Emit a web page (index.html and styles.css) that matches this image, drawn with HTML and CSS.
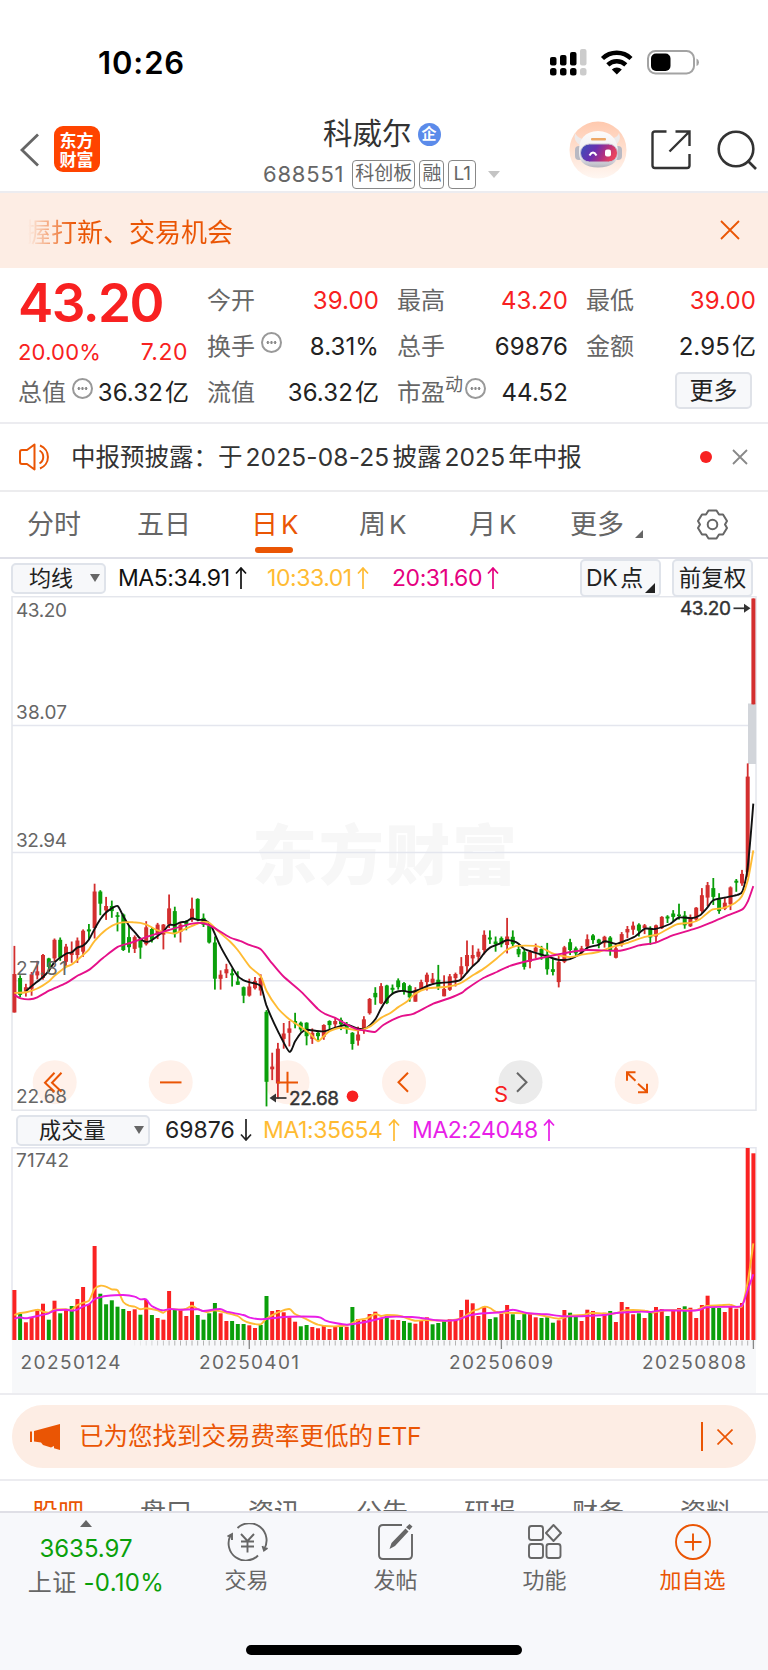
FILE: index.html
```html
<!DOCTYPE html>
<html lang="zh-CN">
<head>
<meta charset="utf-8">
<title>科威尔 688551</title>
<link rel="stylesheet" href="styles.css">
</head>
<body>
<div class="status">
  <span class="clock">10:26</span>
  <svg class="status-icons" width="152" height="30" viewBox="550 47 152 30">
    <g fill="#000"><rect x="551" y="57" width="6.5" height="8.5" rx="2"/><rect x="561" y="55" width="6.5" height="10.5" rx="2"/><rect x="571" y="52" width="6.5" height="13.5" rx="2"/>
    <rect x="551" y="68" width="6.5" height="7.5" rx="2.5"/><rect x="561" y="68" width="6.5" height="7.5" rx="2.5"/><rect x="571" y="68" width="6.5" height="7.5" rx="2.5"/></g>
    <g fill="#ccc"><rect x="581" y="49" width="6.5" height="16.5" rx="2"/><rect x="581" y="68" width="6.5" height="7.5" rx="2.5"/></g>
    <g fill="none" stroke="#000" stroke-width="4.4"><path d="M603.5 58.5a20.5 20.5 0 0 1 28.5 0"/><path d="M608.8 64.8a13 13 0 0 1 18 0"/></g>
    <path d="M612.8 69.5a7.5 7.5 0 0 1 10 0l-5 5z"/>
    <rect x="649" y="51" width="46" height="22.5" rx="7.5" fill="none" stroke="#a3a3a3" stroke-width="2"/>
    <rect x="652" y="53.5" width="19.5" height="17.5" rx="5" fill="#000"/><path d="M697.5 58.5q2.5 1 2.5 3.8t-2.5 3.8z" fill="#a3a3a3"/>
  </svg>
</div>

<header class="header">
  <svg class="back" width="20" height="34" viewBox="0 0 20 34"><path d="M18 1.5 2 17 18 32.500" fill="none" stroke="#666" stroke-width="2.8"/></svg>
  <div class="logo"><span>东方</span><span>财富</span></div>
  <div class="title">
    <div class="name">科威尔<i class="corp">企</i></div>
    <div class="code"><span class="num">688551</span><b>科创板</b><b>融</b><b>L1</b><i class="caret"></i></div>
  </div>
  <svg class="robot" width="58" height="58" viewBox="0 0 58 58">
    <defs><linearGradient id="rb" x1="0" y1="0" x2="0" y2="1"><stop offset="0" stop-color="#ffc9ae"/><stop offset="1" stop-color="#fff7f2"/></linearGradient>
    <linearGradient id="rf" x1="0" y1="0" x2="1" y2=".3"><stop offset="0" stop-color="#3552b8"/><stop offset=".45" stop-color="#6a2fb0"/><stop offset=".75" stop-color="#b3317f"/><stop offset="1" stop-color="#e8445f"/></linearGradient>
    <linearGradient id="rw" x1="0" y1="0" x2="0" y2="1"><stop offset="0" stop-color="#fdfbfa"/><stop offset=".7" stop-color="#ececf0"/><stop offset="1" stop-color="#b4b4be"/></linearGradient></defs>
    <circle cx="29" cy="29" r="28.500" fill="url(#rb)"/>
    <path d="M6 12Q4 20 11 24L16 18Q9 18 6 12zM50 12Q53 20 46 24L41 17Q48 18 50 12z" fill="#eeeaea"/>
    <rect x="6" y="25" width="8" height="14" rx="4" fill="#b9b9c3"/><rect x="45" y="25" width="8" height="14" rx="4" fill="#b9b9c3"/>
    <path d="M10 32Q9 11 29 10Q49 11 49 32Q49 46 29 46.500Q10 46 10 32z" fill="url(#rw)"/>
    <rect x="22" y="17" width="15" height="2.500" rx="1" fill="#eda766"/>
    <rect x="11.500" y="23" width="37" height="18" rx="9" fill="url(#rf)" stroke="#c6c2d2" stroke-width="1"/>
    <path d="M20.500 34.500q3.500-6 7 0" stroke="#fff" stroke-width="2" fill="none"/><rect x="36" y="28.500" width="6" height="7" rx="2" fill="#fff"/>
  </svg>
  <svg class="share" width="40" height="40" viewBox="0 0 40 40"><g fill="none" stroke="#333" stroke-width="2.400"><path d="M15.500 1.500H4Q1.500 1.500 1.500 4V35.500Q1.500 38 4 38H36Q38.500 38 38.500 35.500V24"/><path d="M24.500 1.500H38.500V16M38 2 18.500 21.500"/></g></svg>
  <svg class="search" width="42" height="42" viewBox="0 0 42 42"><g fill="none" stroke="#333" stroke-width="2.600"><circle cx="19" cy="19" r="17.300"/><path d="m30.500 30.500 8.500 8.500"/></g></svg>
</header>

<div class="promo"><span class="promo-text">握打新、交易机会</span>
  <svg width="20" height="20" viewBox="0 0 20 20"><path d="m1 1 18 18M19 1 1 19" stroke="#ea5504" stroke-width="1.800"/></svg></div>

<section class="quote">
  <div class="col lead">
    <div class="price">43.20</div>
    <div class="change"><span>20.00%</span><span class="diff">7.20</span></div>
    <div class="stat"><label>总值</label><i class="tip"></i><em>36.32<u>亿</u></em></div>
  </div>
  <div class="col">
    <div class="stat"><label>今开</label><em class="red">39.00</em></div>
    <div class="stat"><label>换手</label><i class="tip"></i><em>8.31%</em></div>
    <div class="stat"><label>流值</label><em>36.32<u>亿</u></em></div>
  </div>
  <div class="col">
    <div class="stat"><label>最高</label><em class="red">43.20</em></div>
    <div class="stat"><label>总手</label><em>69876</em></div>
    <div class="stat"><label>市盈</label><sup>动</sup><i class="tip close"></i><em>44.52</em></div>
  </div>
  <div class="col">
    <div class="stat"><label>最低</label><em class="red">39.00</em></div>
    <div class="stat"><label>金额</label><em>2.95<u>亿</u></em></div>
    <div class="stat"><span class="more-btn">更多</span></div>
  </div>
</section>

<div class="notice">
  <svg width="34" height="28" viewBox="0 0 34 28"><g fill="none" stroke="#ea5504" stroke-width="2" stroke-linejoin="round"><path d="M15.500 1.500 8 7H3Q1 7 1 9V19Q1 21 3 21H8L15.500 26.500z"/><path d="M20.500 7.500a7.500 7.500 0 0 1 0 13M21 2.500a12.300 12.300 0 0 1 0 23"/></g></svg>
  <span class="notice-text">中报预披露：于<s>2025-08-25</s>披露<s>2025</s>年中报</span>
  <i class="dot"></i>
  <svg class="nx" width="16" height="16" viewBox="0 0 16 16"><path d="m1 1 14 14M15 1 1 15" stroke="#888" stroke-width="1.800"/></svg>
</div>

<nav class="tabs">
  <span>分时</span><span>五日</span><span class="on">日<s>K</s></span><span>周<s>K</s></span><span>月<s>K</s></span><span class="tmore">更多</span>
  <svg width="31" height="31" viewBox="0 0 31 31"><g fill="none" stroke="#666" stroke-width="2" stroke-linejoin="round"><path d="M11.500 1.500H19.500L22 5.500H26L30 12 28 15.500 30 19 26 25.500H22L19.500 29.500H11.500L9 25.500H5L1 19 3 15.500 1 12 5 5.500H9z"/><circle cx="15.500" cy="15.500" r="4.800"/></g></svg>
</nav>

<div class="ma-row">
  <span class="select">均线<i></i></span>
  <span class="t5">MA5:34.91<svg class="arr" width="12" height="22" viewBox="0 0 12 22"><path d="M6 22V1M1 6.500 6 1l5 5.500" fill="none" stroke="currentColor" stroke-width="1.700"/></svg></span>
  <span class="t10">10:33.01<svg class="arr" width="12" height="22" viewBox="0 0 12 22"><path d="M6 22V1M1 6.500 6 1l5 5.500" fill="none" stroke="currentColor" stroke-width="1.700"/></svg></span>
  <span class="t20">20:31.60<svg class="arr" width="12" height="22" viewBox="0 0 12 22"><path d="M6 22V1M1 6.500 6 1l5 5.500" fill="none" stroke="currentColor" stroke-width="1.700"/></svg></span>
  <span class="dk">DK<s>点</s></span><span class="fq">前复权</span>
</div>

<svg id="kline" class="kline" width="768" height="515" viewBox="0 596 768 515"></svg>

<div class="vol-row">
  <span class="select wide">成交量<i></i></span>
  <span class="v0">69876<svg class="arr" width="12" height="22" viewBox="0 0 12 22"><path d="M6 0V21M1 15.500 6 21l5-5.500" fill="none" stroke="currentColor" stroke-width="1.700"/></svg></span>
  <span class="v1">MA1:35654<svg class="arr" width="12" height="22" viewBox="0 0 12 22"><path d="M6 22V1M1 6.500 6 1l5 5.500" fill="none" stroke="currentColor" stroke-width="1.700"/></svg></span>
  <span class="v2">MA2:24048<svg class="arr" width="12" height="22" viewBox="0 0 12 22"><path d="M6 22V1M1 6.500 6 1l5 5.500" fill="none" stroke="currentColor" stroke-width="1.700"/></svg></span>
</div>

<svg id="volume" class="volume" width="768" height="246" viewBox="0 1147 768 246"></svg>

<div class="etf-wrap"><div class="etf">
  <svg width="32" height="26" viewBox="0 0 32 26"><path d="M1 7.500V18" stroke="#ea5504" stroke-width="2"/><path d="M4 7 30 0V26L24 24.300V22L21 23.500 13 21 11 18.500 4 17.500z" fill="#ea5504"/></svg>
  <span class="etf-text">已为您找到交易费率更低的<s>ETF</s></span><i class="bar"></i>
  <svg width="16" height="16" viewBox="0 0 16 16"><path d="m.5.5 15 15M15.500.5l-15 15" stroke="#ea5504" stroke-width="1.700"/></svg>
</div></div>

<nav class="subtabs"><span class="on">股吧</span><span>盘口</span><span>资讯</span><span>公告</span><span>研报</span><span>财务</span><span>资料</span></nav>

<footer class="footer">
  <div class="index"><i class="up"></i><span class="green">3635.97</span><span>上证 <s class="green">-0.10%</s></span></div>
  <div class="act"><svg width="44" height="38" viewBox="0 0 44 38"><g fill="none" stroke="#666" stroke-width="1.900"><path d="M12.500 5A17.200 17.200 0 0 1 39 26.500M33 32.500A17.200 17.200 0 0 1 5.500 12.500M2.500 13.500 7 11V17M42.500 25 39 27.500 37.500 23"/><path d="m16 11 6.500 7 6.500-7M22.500 18V29.500M16 18.500H29M16 23.500H29"/></g></svg><span>交易</span></div>
  <div class="act"><svg width="38" height="38" viewBox="0 0 38 38"><path d="M25 2H6Q2 2 2 6V32Q2 36 6 36H31Q35 36 35 32V11" fill="none" stroke="#666" stroke-width="1.900"/><path d="m32.500 1 3 2.500-3 3.500-3.500-2.700zM28.500 5.500l3 3L18 23l-5.500 3 2-6z" fill="#666"/></svg><span>发帖</span></div>
  <div class="act"><svg width="36" height="38" viewBox="0 0 36 38"><g fill="none" stroke="#666" stroke-width="1.900"><rect x="2" y="3" width="14" height="14" rx="2.500"/><rect x="2" y="21" width="14" height="14" rx="2.500"/><rect x="19.500" y="21" width="14" height="14" rx="2.500"/><path d="m26.500 2 7.500 8-7.500 8-7.500-8z" stroke-linejoin="round"/></g></svg><span>功能</span></div>
  <div class="act orange"><svg width="38" height="38" viewBox="0 0 38 38"><g fill="none" stroke="#ea5504" stroke-width="1.900"><circle cx="19" cy="19" r="17"/><path d="M19 10.500V27.500M10.500 19H27.500"/></g></svg><span>加自选</span></div>
  <i class="home"></i>
</footer>
<script src="chart.js"></script>
</body>
</html>
```
FILE: styles.css
```css
*{box-sizing:border-box}
body{margin:0;width:768px;height:1670px;overflow:hidden;background:#fff;color:#333;font-family:Inter,"Noto Sans CJK SC",sans-serif;font-size:24px;line-height:1}
i,em{font-style:normal}
u,s{text-decoration:none}
svg{display:block;flex:none}
.status{height:112px;display:flex;justify-content:space-between;padding:47px 67px 0 98px}
.clock{font-weight:600;font-size:31px;line-height:31px;color:#000;letter-spacing:.9px}
.header{height:81px;border-bottom:2px solid #ececf0;display:flex;align-items:flex-start;padding-left:20px}
.back{margin-top:21px}
.logo{margin:14px 0 0 13.5px;width:46px;height:46px;border-radius:9px;background:#ff4400;color:#fff;font:700 17px/19px "Noto Sans CJK SC",sans-serif;padding-top:4px;display:grid;grid-template-rows:19px 19px;justify-items:center}
.title{margin-left:164.5px;width:236px}
.name{display:flex;align-items:center;height:44px;padding-left:59px;font-size:29.5px}
.corp{width:23px;height:23px;margin-left:6px;border-radius:50%;background:#5b8bea;color:#fff;font-size:15px;font-weight:700;line-height:22px;text-align:center}
.code{display:flex;align-items:center;height:36px;color:#666}
.num{font-size:22px;letter-spacing:.8px;width:89px;margin-left:-1px;margin-right:1px}
.code b{font-weight:400;font-size:19px;border:1.5px solid #888;border-radius:4px;height:29px;line-height:25px;padding:0 2px;margin-right:4px;white-space:nowrap}
.code b:nth-of-type(3){padding:0 4px}
.caret{border:6.5px solid transparent;border-top:7px solid #c4c4c4;border-bottom:0;margin-left:8px}
.robot{margin:9px 0 0 69px}
.share{margin:18px 0 0 24px}
.search{margin:18px 0 0 26px}
.promo{height:75px;background:#fdede4;display:flex;align-items:center;justify-content:space-between;padding:4px 28px 0 25px}
.promo-text{font-size:26px;background:linear-gradient(90deg,#ea550400 3px,#ea5504 50px);-webkit-background-clip:text;background-clip:text;color:transparent;line-height:34px}
.promo svg{margin-bottom:5px}
.quote{height:156px;border-bottom:2px solid #ececf0;display:grid;grid-template-columns:171px 172px 171px 170px;column-gap:18px;padding-left:18px}
.col{padding-top:10px}
.lead{padding-top:0}
.price{font-size:53px;font-weight:600;color:#f82121;height:68px;line-height:71px;letter-spacing:-1.6px}
.change{height:34px;line-height:33px;display:flex;justify-content:space-between;color:#f82121;font-size:22px;letter-spacing:.2px}
.diff{font-size:23px;letter-spacing:.5px;margin-right:1px}
.stat{height:46px;display:flex;align-items:center;color:#666;white-space:nowrap}
.stat label{font-size:24px}
.stat em{margin-left:auto;font-size:24px;color:#222;letter-spacing:.1px}
.stat em u{margin-left:2px}
.stat em.red{color:#f82121}
.tip{width:21px;height:21px;border:2px solid #999;border-radius:50%;margin:-9px 0 0 6px;display:flex;align-items:center;justify-content:center;flex:none}
.lead .tip{margin-right:-6px}
.tip:before{content:"";width:11px;height:2.5px;background:radial-gradient(circle,#888 1.2px,transparent 1.5px) 0 0/3.67px 2.5px}
.tip.close{margin-left:2px}
.stat sup{font-size:18px;margin-top:-16px;line-height:18px}
.more-btn{margin-left:auto;margin-right:4px;margin-top:-5px;width:77px;height:37px;border:2px solid #dfe2e8;border-radius:5px;background:#f7f8fa;color:#222;text-align:center;line-height:33px;font-size:24px}
.notice{height:68px;border-bottom:2px solid #ececee;display:flex;align-items:center;padding-left:19px}
.notice-text{font-size:24.5px;margin-left:18px;width:629px;white-space:nowrap;color:#333}
.notice-text s{margin:0 3px;letter-spacing:.15px}
.dot{width:12px;height:12px;border-radius:50%;background:#f82121}
.nx{margin-left:20px}
.tabs{height:67px;border-bottom:2px solid #dfe0e8;display:grid;grid-template-columns:110px 114px 108px 110px 101px 127px 34px;padding-left:27px;color:#666;font-size:27px;align-items:center}
.tabs span{height:65px;line-height:65px;position:relative;white-space:nowrap}
.tabs s{margin-left:3px;font-size:26px}
.tabs .on{color:#ea5504}
.tabs .on:after{content:"";position:absolute;left:4px;bottom:4px;width:38px;height:6px;border-radius:3px;background:#ea5504}
.tmore:after{content:"";position:absolute;left:65px;bottom:19px;border:4px solid;border-color:transparent #666 #666 transparent}
.ma-row{height:38px;margin-bottom:-1px;display:flex;align-items:center;padding-left:11px;font-size:23px;letter-spacing:-.45px;white-space:nowrap}
.select{width:95px;height:31px;border:2px solid #dfe3ea;border-radius:5px;background:#f7f8fa;display:flex;align-items:center;padding-left:16px;color:#222;font-size:22px;letter-spacing:0}
.select i{margin-left:auto;margin-right:4px;border:5px solid transparent;border-top:8px solid #666;border-bottom:0}
.ma-row>span:not(.select){display:flex;align-items:center}
.arr{margin-left:5px}
.t5{width:149px;margin-left:12px;color:#111}
.t10{width:125px;color:#ffbb33}
.t20{width:188px;color:#e5007f}
.ma-row .dk,.ma-row .fq{height:38px;border:2px solid #dfe3ea;border-radius:5px;background:#f7f8fa;color:#222;justify-content:center;font-size:23px;position:relative}
.ma-row .dk{width:81px;justify-content:flex-start;padding-left:4px}
.dk s{margin-left:3px}
.dk:after{content:"";position:absolute;right:4px;bottom:2px;border:5.5px solid;border-color:transparent #222 #222 transparent}
.ma-row .fq{width:81px;margin-left:11px;font-size:22.5px;letter-spacing:0}
.kline{font-family:Inter,"Noto Sans CJK SC",sans-serif}
.vol-row{height:36px;display:flex;align-items:center;padding:2px 0 0 16px;font-size:23px;letter-spacing:-.4px;white-space:nowrap}
.vol-row>span{display:flex;align-items:center}
.select.wide{width:134px;padding-left:21px;letter-spacing:.2px}
.v0{margin-left:15px;width:98px;color:#222;letter-spacing:0}
.v1{width:149px;color:#ffbb33}
.v2{color:#e81ee8}
.etf-wrap{height:88px;border-top:2px solid #ececf0;border-bottom:2px solid #ececf0;padding:10px 12px 0}
.etf{height:63px;border-radius:31px;background:#fdede4;display:flex;align-items:center;color:#ea5504;padding-left:18px}
.etf-text{margin-left:17px;width:622px;font-size:24.5px;white-space:nowrap}
.etf-text s{margin-left:4px;letter-spacing:-.3px}
.bar{width:1.5px;height:29px;background:#ea5504;margin-right:14px}
.subtabs{height:30px;overflow:hidden;display:grid;grid-template-columns:repeat(7,108px);padding:17px 0 0 32px;font-size:26px;line-height:30px;color:#666}
.subtabs .on{color:#ea5504}
.footer{height:159px;background:#f7f8fb;border-top:2px solid #dfdfe6;display:grid;grid-template-columns:172px 149px 149px 149px 147px;color:#666;position:relative}
.index{display:flex;flex-direction:column;align-items:center;padding:7px 0 0 20px;font-size:24px;white-space:nowrap}
.up{border:6.5px solid transparent;border-top:0;border-bottom:7px solid #666;margin-right:20px}
.index span{margin-top:10px;line-height:24px}
.index span:nth-of-type(1){margin-right:20px}
.index span:nth-of-type(2){letter-spacing:.3px}
.green{color:#0aa00a}
.act{display:flex;flex-direction:column;align-items:center;padding-top:10px;font-size:22px}
.act span{margin-top:8px;line-height:22px}
.orange{color:#ea5504}
.home{position:absolute;left:246px;top:132px;width:276px;height:10px;border-radius:5px;background:#000}
```
FILE: chart.js
```js
// Candle rows: direction, high, body top, body bottom, low (chart units below the chart origin)
const candles = `R 1053 1136 1250 1250,G 1140 1148 1198 1205,R 1165 1175 1188 1203,R 1130 1137 1180 1200,R 1097 1128 1140 1152,R 1077 1080 1148 1153,G 1088 1090 1115 1130,R 1031 1035 1090 1103,G 1028 1035 1088 1097,R 1047 1055 1100 1112,R 1040 1072 1080 1103,R 1028 1037 1080 1103,R 1004 1008 1070 1085,G 988 1004 1010 1035,R 869 892 1000 1031,G 888 892 928 962,R 908 935 948 976,G 919 935 950 970,G 953 962 967 1010,G 957 960 1065 1068,G 992 1027 1057 1073,R 1022 1027 1062 1074,G 1028 1035 1058 1091,R 980 998 1048 1052,G 997 1003 1035 1043,R 985 990 1020 1033,R 988 990 1020 1063,R 901 942 990 1000,G 937 950 1018 1028,R 985 990 1012 1043,G 977 980 990 1007,R 910 943 975 982,G 912 914 975 980,G 957 970 990 997,G 985 992 1043 1046,G 1025 1043 1150 1182,R 1125 1138 1150 1182,R 1106 1122 1134 1148,G 1120 1134 1140 1173,G 1128 1158 1168 1168,G 1173 1175 1200 1222,R 1150 1173 1200 1203,R 1145 1157 1178 1182,R 1137 1148 1185 1200,G 1243 1248 1455 1528,R 1369 1410 1418 1450,R 1340 1357 1460 1505,R 1281 1312 1328 1357,R 1275 1297 1310 1350,G 1251 1275 1282 1297,G 1277 1280 1300 1307,G 1279 1280 1320 1347,R 1297 1310 1328 1343,G 1308 1310 1320 1335,R 1285 1287 1322 1331,G 1273 1275 1287 1300,R 1266 1275 1285 1297,G 1265 1272 1285 1302,G 1278 1285 1297 1313,G 1308 1310 1343 1360,R 1292 1315 1333 1348,R 1261 1270 1300 1313,R 1207 1210 1252 1256,G 1175 1192 1205 1227,R 1163 1172 1223 1225,G 1168 1170 1222 1225,G 1167 1177 1183 1197,G 1149 1155 1175 1182,G 1160 1163 1188 1197,G 1168 1172 1205 1218,R 1175 1185 1218 1218,R 1153 1160 1180 1185,R 1132 1138 1160 1185,R 1133 1150 1162 1168,G 1109 1153 1175 1183,R 1140 1180 1202 1202,R 1136 1143 1183 1186,R 1132 1136 1148 1173,R 1086 1113 1137 1153,R 1037 1080 1113 1133,R 1051 1080 1090 1113,R 1061 1070 1085 1100,R 1007 1020 1065 1078,G 1007 1028 1034 1047,G 1025 1040 1048 1070,G 1025 1030 1048 1057,R 970 1025 1050 1075,G 1007 1026 1048 1055,G 1052 1062 1078 1086,G 1062 1070 1115 1123,R 1065 1070 1100 1119,R 1046 1058 1070 1090,G 1053 1062 1082 1094,G 1044 1078 1122 1138,G 1088 1122 1130 1140,R 1080 1100 1160 1176,R 1053 1057 1100 1104,G 1032 1042 1065 1080,G 1055 1060 1075 1083,R 1053 1060 1072 1078,R 1019 1033 1055 1060,G 1018 1022 1036 1047,G 1032 1034 1045 1060,R 1023 1026 1045 1058,G 1024 1028 1065 1082,R 1048 1060 1088 1090,R 1012 1018 1050 1055,R 994 1003 1013 1030,R 981 993 1005 1020,G 986 990 1008 1025,R 988 992 1000 1018,G 995 1000 1028 1050,R 990 992 1025 1043,R 965 967 1000 1003,G 962 966 972 985,G 947 957 967 982,G 928 960 965 975,G 950 963 992 1002,R 960 968 995 997,R 938 940 975 980,R 882 903 950 955,R 864 873 910 935,G 852 882 908 932,G 897 915 950 958,R 910 925 943 947,R 877 880 930 947,G 855 860 866 893,R 828 840 868 875,R 513 552 835 850,R 25 25 338 338`.split(',').map(r => r.split(' '));

const volumes = 'R570 G642 R667 R652 R632 R611 G659 R602 G640 R630 G618 R597 R561 R612 R438 G581 G613 G601 G620 G627 R633 R628 G644 R600 G645 R654 R659 R573 G630 R628 R648 R605 G645 G659 G640 G609 R640 R663 G663 G672 G672 R676 R684 G675 G588 R633 R630 R637 R652 R665 G679 G675 R681 R685 R676 R687 R680 G679 R680 G621 R657 R660 R642 R635 R655 G647 R659 R660 G663 G668 R671 R663 R652 G673 G669 G663 R657 R658 R630 R599 R610 R648 R622 G657 G652 R641 R615 G643 G660 G641 R640 R652 G654 G652 G668 R661 R630 G638 G648 R663 R629 R633 G654 R638 G633 R666 R606 R621 R643 G640 R654 G638 R621 R627 G648 R633 R624 G619 R623 R654 R615 R587 G622 G624 R636 R620 R626 R609 R144 R160'.split(' ');

const PRICE = 2.9585, VOL = 3;
const f = n => n.toFixed(1);
const cx = i => 14.4 + i * 5.729;
const py = v => 590 + v / PRICE;
// Smooth curve through points given as "x,y"
function curve(text, oy, color, sy) {
  const p = text.trim().split(/\s+/).map(s => { const [x, y] = s.split(','); return [x / 3, oy + y / sy]; });
  let d = `M${f(p[0][0])} ${f(p[0][1])}`;
  for (let i = 1; i < p.length; i++) {
    const a = p[i - 2] || p[i - 1], b = p[i - 1], c = p[i], e = p[i + 1] || c, k = 0.12;
    d += `C${f(b[0] + (c[0] - a[0]) * k)} ${f(b[1] + (c[1] - a[1]) * k)} ${f(c[0] - (e[0] - b[0]) * k)} ${f(c[1] - (e[1] - b[1]) * k)} ${f(c[0])} ${f(c[1])}`;
  }
  return `<path d="${d}" fill="none" stroke="${color}" stroke-width="1.9" stroke-linejoin="round"/>`;
}
const text = (x, y, s, len, extra = '') => `<text x="${x}" y="${y}" font-size="19" fill="#666" textLength="${len}" ${extra}>${s}</text>`;
const line = (x1, y1, x2, y2, c = '#e4e6ee', w = 1.5) => `<path d="M${x1} ${y1}L${x2} ${y2}" stroke="${c}" stroke-width="${w}"/>`;

let k = '';
k += `<text x="252" y="879" font-size="65" font-weight="900" fill="#f7f7f7" textLength="265">东方财富</text>`;
k += `<rect x="12" y="596.7" width="744" height="513.5" fill="none" stroke="#e4e6ec" stroke-width="1.5"/>`;
[725.5, 852.6, 980.7].forEach(y => k += line(12, y, 756, y));
[54.7, 170.7, 287.5, 404, 520.5, 636.7].forEach((x, i) => k += `<circle cx="${x}" cy="1082.2" r="22" fill="${i === 4 ? '#ebebeb' : '#fff1ea'}"/>`);
k += '<rect x="748" y="703.5" width="8" height="60.5" fill="#d2d5da"/>';
candles.forEach(([c, h, t, b, l], i) => {
  const col = c === 'R' ? '#d32f2f' : '#0a9f0a', x = cx(i);
  k += `<rect x="${f(x - .9)}" y="${f(py(h))}" width="1.8" height="${f((l - h) / PRICE)}" fill="${col}"/>`;
  k += `<rect x="${f(x - 2)}" y="${f(py(t))}" width="4" height="${f((b - t) / PRICE)}" fill="${col}"/>`;
});
k += curve('78,1187 100,1168 129,1145 146,1127 163,1102 198,1076 215,1072 232,1058 250,1052 267,1034 284,1002 301,974 318,954 335,942 353,935 370,965 387,993 404,1012 421,1032 438,1041 455,1036 490,1010 507,991 524,991 541,983 559,981 576,971 593,976 615,977 634,995 662,1056 696,1115 713,1142 730,1154 750,1161 782,1172 799,1228 834,1306 868,1366 885,1336 903,1310 920,1301 971,1306 1006,1295 1040,1286 1075,1298 1100,1295 1126,1270 1143,1238 1160,1212 1178,1194 1195,1187 1212,1186 1230,1190 1260,1182 1285,1170 1310,1163 1350,1160 1380,1154 1400,1133 1418,1113 1435,1098 1452,1075 1470,1058 1495,1048 1520,1036 1540,1039 1555,1046 1573,1062 1605,1073 1640,1083 1675,1094 1710,1092 1735,1080 1763,1058 1795,1050 1815,1039 1848,1047 1880,1036 1905,1025 1935,1002 1965,1003 2010,988 2037,969 2075,971 2100,962 2120,942 2140,918 2170,911 2212,902 2228,890 2243,820 2260,632', 590, '#111', PRICE);
k += curve('43,1192 78,1190 112,1179 146,1158 163,1142 198,1115 215,1108 250,1079 267,1063 284,1038 318,1005 353,986 400,983 438,989 473,1007 524,1016 559,1001 590,988 610,982 628,985 655,1010 690,1040 713,1065 750,1115 782,1143 800,1187 834,1238 868,1270 903,1293 930,1313 954,1335 971,1320 989,1305 1023,1295 1075,1303 1109,1292 1143,1266 1170,1252 1195,1234 1220,1218 1245,1195 1280,1179 1340,1174 1380,1164 1415,1142 1450,1121 1490,1090 1520,1065 1550,1053 1607,1053 1632,1062 1660,1076 1710,1086 1750,1078 1795,1071 1840,1055 1880,1045 1932,1027 1975,1018 2030,989 2070,985 2100,974 2135,946 2170,941 2205,926 2225,907 2243,860 2260,770', 590, '#ffbb33', PRICE);
k += curve('43,1198 62,1208 90,1211 112,1205 150,1184 198,1163 235,1140 267,1124 310,1088 353,1056 395,1043 438,1027 507,1006 576,987 610,986 640,998 690,1028 720,1038 750,1051 782,1063 810,1097 850,1143 903,1188 954,1240 975,1254 1006,1266 1040,1285 1070,1299 1100,1304 1126,1307 1150,1287 1200,1262 1240,1254 1300,1224 1350,1207 1385,1192 1400,1180 1450,1148 1490,1130 1530,1112 1590,1096 1640,1085 1700,1073 1760,1065 1860,1067 1920,1051 1965,1044 2020,1021 2085,1002 2140,981 2185,962 2228,944 2244,920 2260,876', 590, '#e5108a', PRICE);
[[616.8, '43.20'], [719, '38.07'], [846.8, '32.94'], [974.5, '27.81'], [1103, '22.68']].forEach(([y, s]) => k += text(16, y, s, 51));
k += text(680, 615, '43.20', 51, 'style="fill:#333;stroke:#333;stroke-width:.4"') + '<path d="M733.5 608.3H746" stroke="#333" stroke-width="1.7"/><path d="m744 603.8 6.5 4.5-6.5 4.5z" fill="#333"/>';
k += text(289, 1104.7, '22.68', 50, 'style="fill:#333;stroke:#333;stroke-width:.4"') + '<path d="M275 1098H286.5" stroke="#333" stroke-width="1.7"/><path d="m276 1093.5-6.5 4.5 6.5 4.5z" fill="#333"/><circle cx="352.5" cy="1096.2" r="5.8" fill="#f82121"/>';
const ic = (d, c = '#ea5504') => `<path d="${d}" fill="none" stroke="${c}" stroke-width="2"/>`;
k += '<g transform="translate(0 6.7)">' + ic('M54.5 1066 45 1076 54.5 1085M61.5 1066 52 1076 61.5 1085') + ic('M160 1075.7H181.5') + ic('M277 1075.7H298M287.5 1065V1086') + ic('M408 1066 398.5 1075.500 408 1085') + ic('M517 1066 526.5 1075.5 517 1085', '#666') + ic('M627 1074V1065.5H635.500M627 1066 635.5 1074M647 1077V1085.5H638M647 1085 638 1077') + '</g>';
k += '<text x="494" y="1101.500" font-size="22" fill="#f82121">S</text>';
document.getElementById('kline').innerHTML = k;

let v = '<rect x="12" y="1340" width="744" height="53" fill="#f7f8fa"/>' + line(12, 1147.8, 756, 1147.8) + line(12, 1147, 12, 1340) + line(756, 1147, 756, 1340);
volumes.forEach((s, i) => {
  const t = 1100 + s.slice(1) / VOL;
  v += `<rect x="${f(cx(i) - 2)}" y="${f(t)}" width="4" height="${f(1340 - t)}" fill="${s[0] === 'R' ? '#fa2222' : '#0a9f0a'}"/>`;
  if (i > 20) v += `<path d="M${f(cx(i))} 1340.5v5" stroke="#aaa" stroke-width=".9" opacity="${Math.min(1, (i - 20) / 8)}"/>`;
});
[41, 85, 129].forEach(i => v += line(f(cx(i)), 1340, f(cx(i)), 1349, '#888', 1.3));
v += curve('43,645 60,639 78,637 112,629 129,635 146,638 163,629 198,628 215,629 232,615 250,608 267,602 284,566 301,557 318,560 335,568 353,571 370,606 387,617 404,620 421,628 438,625 473,631 490,638 507,627 541,629 559,626 576,617 593,627 620,636 645,631 680,639 713,648 730,661 750,669 782,673 799,656 834,637 868,627 885,642 920,658 954,674 989,679 1040,676 1075,660 1100,655 1126,642 1143,648 1160,645 1200,648 1245,662 1280,660 1340,662 1385,654 1418,633 1435,628 1452,620 1470,624 1487,635 1510,638 1580,640 1620,645 1675,656 1710,647 1750,645 1775,639 1840,641 1880,631 1935,632 1960,638 1987,632 2060,629 2085,631 2120,618 2160,616 2190,614 2225,620 2243,545 2260,430', 1100, '#ffbb33', VOL);
v += curve('43,656 60,652 78,655 112,648 146,640 163,632 198,629 215,632 232,629 250,619 267,613 284,597 301,592 318,588 370,585 404,590 421,598 438,598 455,618 487,631 510,627 541,629 593,628 610,633 660,627 680,635 730,645 750,653 782,658 830,653 868,650 954,651 975,661 1006,669 1040,674 1092,667 1126,659 1160,651 1210,650 1260,653 1310,661 1365,661 1385,655 1410,646 1450,640 1500,637 1540,629 1580,639 1640,643 1690,649 1760,648 1820,644 1850,639 1920,635 1950,636 1990,631 2070,632 2100,629 2120,622 2185,620 2225,617 2243,570 2260,523', 1100, '#e81ee8', VOL);
v += text(16, 1166.5, '71742', 53);
v += text(20.5, 1369, '20250124', 100) + text(199, 1369, '20250401', 100) + text(449, 1369, '20250609', 104) + text(642, 1369, '20250808', 104);
document.getElementById('volume').innerHTML = v;
```
